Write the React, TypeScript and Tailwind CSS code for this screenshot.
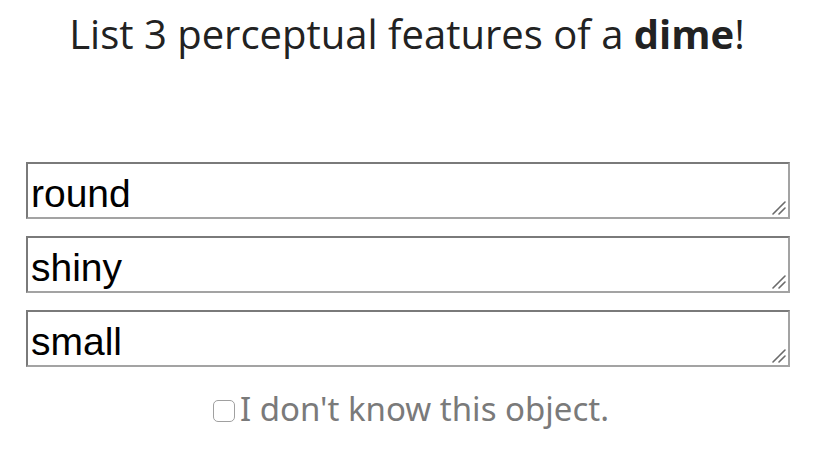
import { useState } from "react";

const features = ["round", "shiny", "small"];

function Grip() {
  return (
    <svg
      className="pointer-events-none absolute bottom-[4px] right-[4px]"
      width="14"
      height="14"
      viewBox="0 0 14 14"
    >
      <path d="M1 13L13 1M7 13L13 7" stroke="#6b6b6b" strokeWidth="1.6" strokeLinecap="round" />
    </svg>
  );
}

export default function App() {
  const [values, setValues] = useState(features);
  const [unknown, setUnknown] = useState(false);

  return (
    <div className="h-[464px] w-[814px] bg-white font-['Open_Sans',sans-serif]">
      <h1 className="pt-[7px] text-center text-[40px] leading-[54px] text-[#222]">
        List 3 perceptual features of a <b className="font-bold">dime</b>!
      </h1>

      <div className="mt-[101px] flex flex-col gap-[17px] pl-[26px]">
        {values.map((v, i) => (
          <div key={i} className="relative h-[57px] w-[764px]">
            <textarea
              value={v}
              onChange={(e) =>
                setValues(values.map((x, j) => (j === i ? e.target.value : x)))
              }
              className="block h-full w-full resize-none border-2 border-t-[#7a7a7a] border-l-[#7a7a7a] border-r-[#a3a3a3] border-b-[#a3a3a3] px-[3px] pt-[8px] font-['Liberation_Sans',Arial,sans-serif] text-[39px] leading-[44px] text-black outline-none"
            />
            <Grip />
          </div>
        ))}
      </div>

      <label className="mt-[20px] flex items-center justify-center gap-[5px] pl-[8px] font-['Noto_Sans',sans-serif] text-[33px] leading-[44px] text-[#7a7a7a]">
        <input
          type="checkbox"
          checked={unknown}
          onChange={(e) => setUnknown(e.target.checked)}
          className="mt-[4px] h-[22px] w-[22px] appearance-none rounded-[5px] border border-[#a0a0a0] bg-white"
        />
        I don't know this object.
      </label>
    </div>
  );
}
